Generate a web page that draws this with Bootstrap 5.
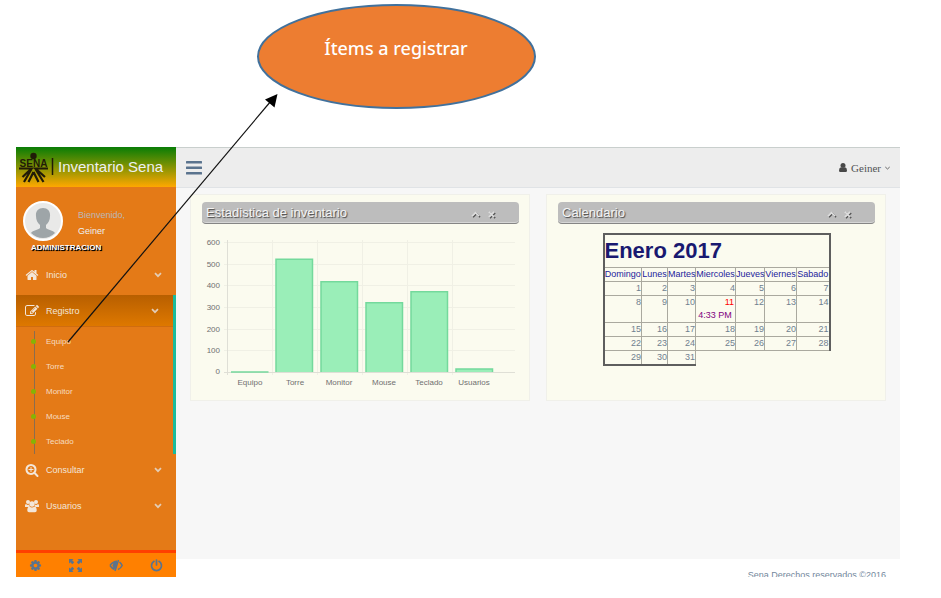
<!DOCTYPE html>
<html lang="es">
<head>
<meta charset="utf-8">
<meta name="viewport" content="width=device-width, initial-scale=1">
<title>Inventario Sena</title>
<link href="https://cdn.jsdelivr.net/npm/bootstrap@5.3.0/dist/css/bootstrap.min.css" rel="stylesheet">
<style>
body{font-family:"Liberation Sans",Arial,sans-serif;font-size:9px;line-height:14px;color:#73879c;background:#fff}
.page{padding:147px 41px 21px 16px;min-height:100vh}
.note{position:absolute;top:0;left:0;pointer-events:none;z-index:5}
.note text{font-family:"Noto Sans",sans-serif;font-size:18px;font-weight:500;fill:#fff}
.side{width:160px;background:#e47a17;flex:none}
.brand{height:40px;background:linear-gradient(#087d06,#ffa800);color:#ecf0f1;font-size:15px;text-decoration:none;padding-left:3px}
.brand:hover{color:#fff}
.profile{height:72px;padding:14px 0 0 7px}
.avatar{width:40px;height:40px}
.hello{padding:6px 0 0 15px;line-height:16px}
.hello span{color:#bab8b8}
.hello strong{color:#ecf0f1;font-weight:400}
.role{font-size:8px;font-weight:700;line-height:14px;color:#fff;text-shadow:1px 1px 1px #000,1px 1px 0 #000;padding-left:8px}
.side-menu li.entry{margin-bottom:4px}
.side-menu li.open{margin-bottom:0;border-right:3px solid #1abb9c}
.entry>a{display:flex;align-items:center;height:32px;padding:0 14px 0 9px;color:#f3e6d8;text-decoration:none}
.entry>a svg:first-child{margin-right:7px}
.entry>a svg:last-child{color:#e3cdb6}
.entry>a span{flex:1}
.open>a{background:linear-gradient(#b85f00,#de7800);border-bottom:1px solid #cf6c10;margin-bottom:2px}
.sub{position:relative}
.sub a{display:flex;align-items:center;height:25px;padding-left:15px;gap:10px;font-size:8px;color:#f6dcc0;text-decoration:none}
.sub a::before{content:"";width:5px;height:5px;border-radius:50%;background:#86b404;z-index:1}
.sub::before{content:"";position:absolute;left:18px;top:2px;bottom:0;width:1px;background:#8a6d4f}
.tools{height:27px;border-top:3px solid #ff4000;background:#ff8000}
.tools button{color:#5a738e;background:none;border:0;padding:0}
.topnav{height:41px;background:#ededed;border-top:1px solid #c9cfcd;border-bottom:1px solid #e0e3e6;padding:0 10px}
.topnav button{border:0;background:none;padding:0}
.user{font-family:"Liberation Serif","Times New Roman",serif;font-size:11px;color:#515356;text-decoration:none}
.work{background:#f7f7f7}
.board{padding:6px 14px 0 14px}
.panel{background:#fbfbef;border:1px solid #f0f0ea;padding:7px 10px 0 11px;height:100%}
.bar{height:22px;background:#bdbdbd;border-radius:4px;border-bottom:1px solid #858585;box-shadow:inset 0 -1px #d6d6d6;padding:0 24px 0 4px}
.bar h2{font-size:13px;line-height:20px;color:#f4f4f4;margin:0;text-shadow:1px 1px 1px #444}
.bar button{border:0;background:none;padding:3px 0 0;line-height:8px;color:#ddd;filter:drop-shadow(1px 1px 0 #555)}
.chart{margin-top:8px;display:block}
.chart text{font-size:8px;fill:#707070}
.cal{border-collapse:collapse;margin:9px auto 34px;table-layout:fixed;width:226px;color:#708090}
.cal caption{caption-side:top;padding:0;border:2px solid #5e5e5e;border-bottom:0;color:#191970;font-size:22px;font-weight:700;line-height:32px}
.cal th,.cal td{border:1px solid #aaa99f;padding:0;height:14px;line-height:13px;text-align:right;vertical-align:top;white-space:nowrap}
.cal th{color:#23239b;font-weight:400;text-align:center}
.cal tr>:first-child{border-left:2px solid #5e5e5e}
.cal tr>:nth-child(7){border-right:2px solid #5e5e5e}
.cal .last td{border-bottom:2px solid #5e5e5e}
.cal .today{color:red;padding-right:1px}
.cal time{color:#800080;display:block;text-align:center}
.foot{height:18px;background:#fff;overflow:hidden;padding:9px 14px 0}
</style>
<script src="https://cdn.jsdelivr.net/npm/bootstrap@5.3.0/dist/js/bootstrap.bundle.min.js"></script>
</head>
<body>
<svg width="0" height="0" class="position-absolute" aria-hidden="true">
<symbol id="down" viewBox="0 0 8 8"><path d="M1 2.200l3 3 3-3" fill="none" stroke="currentColor" stroke-width="1.700"/></symbol>
<symbol id="up" viewBox="0 0 10 8"><path d="M1 6l4-4 4 4" fill="none" stroke="currentColor" stroke-width="2"/></symbol>
<symbol id="close" viewBox="0 0 8 8"><path d="M1 1l6 6M7 1L1 7" stroke="currentColor" stroke-width="2"/></symbol>
</svg>
<svg class="note" width="540" height="350" viewBox="0 0 540 350">
<ellipse cx="396.5" cy="56.5" rx="138.500" ry="51.500" fill="#ed7d31" stroke="#41719c" stroke-width="2"/>
<text x="396" y="55" text-anchor="middle">Ítems a registrar</text>
<path d="M68 342L271 101" stroke="#111" stroke-width="1.200"/><path d="M277.500 94l-12.500 5.500 9.500 8z" fill="#000"/>
</svg>
<div class="page d-flex">
<aside class="side d-flex flex-column">
<a class="brand d-flex align-items-center" href="#">
<svg width="35" height="34" viewBox="0 0 35 34" aria-label="SENA"><circle cx="14.500" cy="6" r="3.200" fill="#211b08"/><text x="14.500" y="16.500" text-anchor="middle" font-size="10" font-weight="700" fill="#211b08">SENA</text><path d="M0 18.500h12.500L3.500 27M29 18.500H16.500L26 27M12.500 19L5 32M16.500 19l8 13M14.500 22l-5 10M14.500 22l5 10" fill="none" stroke="#211b08" stroke-width="2.200"/><path d="M33.500 8v17" stroke="#211b08" stroke-width="1.500"/></svg>
<span class="ms-1">Inventario Sena</span></a>
<div class="profile">
<div class="d-flex"><svg class="avatar" viewBox="0 0 40 40" role="img" aria-label="Foto de perfil"><circle cx="20" cy="20" r="19" fill="#e9e9e8" stroke="#fff" stroke-width="2"/><path d="M20 7c-5 0-7.500 3.500-7 8 0 4 1.500 7 4 9v3c-2 2-7 2-9 5a17 17 0 0 0 24 0c-2-3-7-3-9-5v-3c2.500-2 4-5 4-9 .5-4.500-2-8-7-8z" fill="#9ea5a8"/></svg>
<div class="hello d-flex flex-column"><span>Bienvenido,</span><strong>Geiner</strong></div></div>
<div class="role">ADMINISTRACION</div>
</div>
<ul class="side-menu list-unstyled mb-0 flex-grow-1">
<li class="entry"><a href="#"><svg width="14" height="14" viewBox="0 0 1792 1792" fill="currentColor"><path d="M1472 992v480q0 26-19 45t-45 19h-384v-384h-256v384h-384q-26 0-45-19t-19-45v-480q0-1 .5-3t.5-3l575-474 575 474q1 2 1 6zm223-69l-62 74q-8 9-21 11h-3q-13 0-21-7l-692-577-692 577q-12 8-24 7-13-2-21-11l-62-74q-8-10-7-23.500t11-21.500l719-599q32-26 76-26t76 26l244 204v-195q0-14 9-23t23-9h192q14 0 23 9t9 23v408l219 182q10 8 11 21.500t-7 23.500z"/></svg><span>Inicio</span><svg width="8" height="8"><use href="#down"/></svg></a></li>
<li class="entry open"><a href="#"><svg width="14" height="14" viewBox="0 0 1792 1792" fill="currentColor"><path d="M888 1184l116-116-152-152-116 116v56h96v96h56zm440-720q-16-16-33 1l-350 350q-17 17-1 33t33-1l350-350q17-17 1-33zm80 594v190q0 119-84.500 203.500t-203.500 84.500h-832q-119 0-203.500-84.500t-84.500-203.500v-832q0-119 84.500-203.500t203.500-84.500h832q63 0 117 25 15 7 18 23 3 17-9 29l-49 49q-14 14-32 8-23-6-45-6h-832q-66 0-113 47t-47 113v832q0 66 47 113t113 47h832q66 0 113-47t47-113v-126q0-13 9-22l64-64q15-15 35-7t20 29zm-96-738l288 288-672 672h-288v-288zm444 132l-92 92-288-288 92-92q28-28 68-28t68 28l152 152q28 28 28 68t-28 68z"/></svg><span>Registro</span><svg width="8" height="8"><use href="#down"/></svg></a>
<ul class="sub list-unstyled"><li><a href="#">Equipo</a></li><li><a href="#">Torre</a></li><li><a href="#">Monitor</a></li><li><a href="#">Mouse</a></li><li><a href="#">Teclado</a></li></ul></li>
<li class="entry"><a href="#"><svg width="14" height="14" viewBox="0 0 1792 1792" fill="currentColor"><path d="M1088 800v64q0 13-9.500 22.500t-22.500 9.500h-224v224q0 13-9.500 22.500t-22.500 9.500h-64q-13 0-22.500-9.500t-9.500-22.500v-224h-224q-13 0-22.500-9.500t-9.500-22.500v-64q0-13 9.500-22.500t22.500-9.500h224v-224q0-13 9.500-22.500t22.500-9.500h64q13 0 22.500 9.500t9.500 22.500v224h224q13 0 22.500 9.500t9.500 22.500zm128 32q0-185-131.500-316.500t-316.500-131.500-316.500 131.500-131.500 316.500 131.500 316.500 316.500 131.500 316.500-131.500 131.500-316.500zm512 832q0 53-37.500 90.500t-90.500 37.500q-54 0-90-38l-343-342q-179 124-399 124-143 0-273.500-55.500t-225-150-150-225-55.500-273.500 55.500-273.500 150-225 225-150 273.500-55.500 273.500 55.500 225 150 150 225 55.500 273.500q0 220-124 399l343 343q37 37 37 90z"/></svg><span>Consultar</span><svg width="8" height="8"><use href="#down"/></svg></a></li>
<li class="entry"><a href="#"><svg width="14" height="14" viewBox="0 0 14 14" fill="currentColor"><circle cx="3" cy="3" r="2"/><circle cx="11" cy="3" r="2"/><circle cx="7" cy="5" r="2.700"/><path d="M0 8V6.500Q0 5 1 5q2 1.500 3 .5.300 2 1.300 2.500H2zM14 8V6.500Q14 5 13 5q-2 1.500-3 .5-.3 2-1.300 2.500H12zM2.300 11.500Q2.300 7.800 4.500 7.500q2.500 1.800 5 0 2.200.3 2.200 4 0 1.700-1.700 1.700H4q-1.700 0-1.700-1.700z"/></svg><span>Usuarios</span><svg width="8" height="8"><use href="#down"/></svg></a></li>
</ul>
<div class="tools d-flex justify-content-around align-items-center">
<button type="button" aria-label="Ajustes"><svg width="13" height="13" viewBox="0 0 1792 1792" fill="currentColor"><path d="M1152 896q0-106-75-181t-181-75-181 75-75 181 75 181 181 75 181-75 75-181zm512-109v222q0 12-8 23t-20 13l-185 28q-19 54-39 91 35 50 107 138 10 12 10 25t-9 23q-27 37-99 108t-94 71q-12 0-26-9l-138-108q-44 23-91 38-16 136-29 186-7 28-36 28h-222q-14 0-24.500-8.500t-11.500-21.500l-28-184q-49-16-90-37l-141 107q-10 9-25 9-14 0-25-11-126-114-165-168-7-10-7-23 0-12 8-23 15-21 51-66.500t54-70.500q-27-50-41-99l-183-27q-13-2-21-12.500t-8-23.500v-222q0-12 8-23t19-13l186-28q14-46 39-92-40-57-107-138-10-12-10-24 0-10 9-23 26-36 98.500-107.500t94.500-71.500q13 0 26 10l138 107q44-23 91-38 16-136 29-186 7-28 36-28h222q14 0 24.500 8.500t11.500 21.500l28 184q49 16 90 37l142-107q9-9 24-9 13 0 25 10 129 119 165 170 7 8 7 22 0 12-8 23-15 21-51 66.500t-54 70.500q26 50 41 98l183 28q13 2 21 12.500t8 23.500z"/></svg></button>
<button type="button" aria-label="Pantalla completa"><svg width="13" height="13" viewBox="0 0 13 13" fill="currentColor"><path d="M0 0h4.500L3.200 1.300l2 2-1.900 1.900-2-2L0 4.500zM13 0v4.500l-1.300-1.300-2 2-1.900-1.900 2-2L8.500 0zM0 13V8.500l1.300 1.300 2-2 1.900 1.900-2 2L4.500 13zM13 13H8.500l1.300-1.300-2-2 1.900-1.900 2 2L13 8.500z"/></svg></button>
<button type="button" aria-label="Ocultar"><svg width="14" height="13" viewBox="0 0 14 13" fill="none" stroke="currentColor"><path d="M1 6.500Q4 2.300 8 2.300M1 6.500q2 3 4.500 4M10.500 3q1.500 1.300 2.700 3.500-1.500 3-4.200 4" stroke-width="1.500"/><path d="M9.500 1L6 12" stroke-width="1.500"/><path d="M8 3Q4 3 4 6.500 4 9 6 9.500z" fill="currentColor"/></svg></button>
<button type="button" aria-label="Salir"><svg width="13" height="13" viewBox="0 0 13 13" fill="none" stroke="currentColor" stroke-width="1.700" stroke-linecap="round"><path d="M4 2.300a5 5 0 1 0 5 0M6.500 1v5"/></svg></button>
</div>
</aside>
<main class="work flex-grow-1 d-flex flex-column">
<nav class="topnav d-flex justify-content-between align-items-center">
<button type="button" aria-label="Menú"><svg class="d-block" width="16" height="14" viewBox="0 0 16 14" fill="#5a738e"><rect y="0" width="16" height="2.500" rx=".5"/><rect y="5.500" width="16" height="2.500" rx=".5"/><rect y="11" width="16" height="2.500" rx=".5"/></svg></button>
<a class="user d-flex align-items-center" href="#"><svg class="me-1" width="8" height="9" viewBox="0 0 8 9" fill="#484848"><circle cx="4" cy="2.500" r="2.500"/><path d="M0 7.500Q0 4.500 2 4.200q2 1.500 4 0 2 .3 2 3.300Q8 9 6.800 9H1.200Q0 9 0 7.500z"/></svg>Geiner<svg class="ms-1" width="5" height="4" viewBox="0 0 5 4"><path d="M.3 1l2.200 2L4.700 1" fill="none" stroke="#666"/></svg></a>
</nav>
<div class="board flex-grow-1">
<div class="row g-0 row-cols-2">
<section class="col pe-2"><div class="panel">
<div class="bar d-flex align-items-center justify-content-between"><h2>Estadistica de inventario</h2><div class="d-flex gap-2"><button type="button" aria-label="Plegar"><svg width="9" height="7"><use href="#up"/></svg></button><button type="button" aria-label="Cerrar"><svg width="7" height="7"><use href="#close"/></svg></button></div></div>
<svg class="chart w-100" viewBox="0 0 317 159" role="img" aria-label="Estadistica de inventario">
<path d="M22 10.500H313M22 32.500H313M22 53.500H313M22 75.500H313M22 97.500H313M22 118.500H313M70.500 8V143M115.500 8V143M160.500 8V143M205.500 8V143M250.500 8V143" stroke="#f0f0e5"/>
<path d="M25.500 8V143M22 140.500H313" stroke="#dfdfd6"/>
<g text-anchor="end"><text x="18" y="13">600</text><text x="18" y="35">500</text><text x="18" y="56">400</text><text x="18" y="78">300</text><text x="18" y="100">200</text><text x="18" y="121">100</text><text x="18" y="142">0</text></g>
<g fill="#9aeeb8" stroke="#74d99c" stroke-width="1.500"><path d="M29 140h37.500"/><path d="M74 140V27.300h36.500V140M119 140V49.800h36.500V140M164 140V70.800h36.500V140M209 140V59.800h36.500V140M254 140v-3h36.500v3"/></g>
<g text-anchor="middle"><text x="48" y="153">Equipo</text><text x="93" y="153">Torre</text><text x="137" y="153">Monitor</text><text x="182" y="153">Mouse</text><text x="227" y="153">Teclado</text><text x="272" y="153">Usuarios</text></g>
</svg>
</div></section>
<section class="col ps-2"><div class="panel">
<div class="bar d-flex align-items-center justify-content-between"><h2>Calendario</h2><div class="d-flex gap-2"><button type="button" aria-label="Plegar"><svg width="9" height="7"><use href="#up"/></svg></button><button type="button" aria-label="Cerrar"><svg width="7" height="7"><use href="#close"/></svg></button></div></div>
<table class="cal"><caption>Enero 2017</caption>
<colgroup><col width="38"><col width="26"><col width="28"><col width="40"><col width="29"><col width="32"><col width="33"></colgroup>
<thead><tr><th>Domingo</th><th>Lunes</th><th>Martes</th><th>Miercoles</th><th>Jueves</th><th>Viernes</th><th>Sabado</th></tr></thead>
<tbody>
<tr><td>1</td><td>2</td><td>3</td><td>4</td><td>5</td><td>6</td><td>7</td></tr>
<tr><td>8</td><td>9</td><td>10</td><td class="today">11<time>4:33 PM</time></td><td>12</td><td>13</td><td>14</td></tr>
<tr><td>15</td><td>16</td><td>17</td><td>18</td><td>19</td><td>20</td><td>21</td></tr>
<tr><td>22</td><td>23</td><td>24</td><td>25</td><td>26</td><td>27</td><td>28</td></tr>
<tr class="last"><td>29</td><td>30</td><td>31</td></tr>
</tbody></table>
</div></section>
</div>
</div>
<footer class="foot text-end">Sena Derechos reservados ©2016</footer>
</main>
</div>
</body>
</html>
